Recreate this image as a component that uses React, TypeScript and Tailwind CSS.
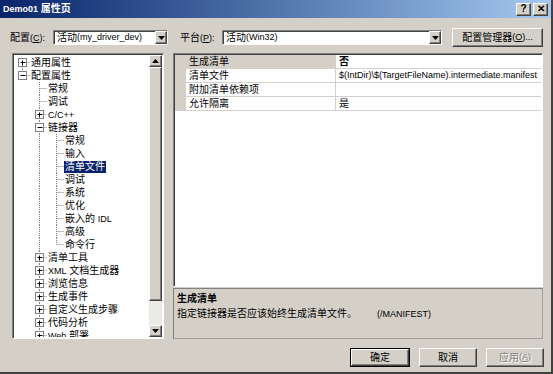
import React from 'react';

const FONT = { fontFamily: '"Liberation Sans", "Noto Sans CJK SC", sans-serif' };

const L: React.FC<{ children: React.ReactNode }> = ({ children }) => (
  <span className="text-[9px]">{children}</span>
);

const raised =
  'bg-[#d4d0c8] border border-t-white border-l-white border-b-[#404040] border-r-[#404040] shadow-[inset_-1px_-1px_0_#808080]';
const sunken =
  'border border-t-[#808080] border-l-[#808080] border-b-white border-r-white shadow-[inset_1px_1px_0_#404040]';

const Arrow: React.FC<{ up?: boolean }> = ({ up }) => (
  <svg width="7" height="4" viewBox="0 0 7 4">
    <path d={up ? 'M3.5 0 L7 4 L0 4 Z' : 'M0 0 L7 0 L3.5 4 Z'} fill="#000" />
  </svg>
);

const Combo: React.FC<{ w: string; children: React.ReactNode }> = ({ w, children }) => (
  <div className={`${w} h-[15px] bg-white flex items-stretch ${sunken}`}>
    <div className="flex-1 flex items-center pl-[3px] text-[10px] leading-none whitespace-nowrap overflow-hidden">
      {children}
    </div>
    <div className={`w-[12px] flex items-center justify-center ${raised}`}>
      <Arrow />
    </div>
  </div>
);

type Node = {
  label: React.ReactNode;
  level: number;
  kind: 'plus' | 'minus' | 'leaf';
  guides: boolean[];
  last?: boolean;
  first?: boolean;
  selected?: boolean;
};

const tree: Node[] = [
  { label: '通用属性', level: 0, kind: 'plus', guides: [], first: true },
  { label: '配置属性', level: 0, kind: 'minus', guides: [], last: true },
  { label: '常规', level: 1, kind: 'leaf', guides: [false] },
  { label: '调试', level: 1, kind: 'leaf', guides: [false] },
  { label: <L>C/C++</L>, level: 1, kind: 'plus', guides: [false] },
  { label: '链接器', level: 1, kind: 'minus', guides: [false] },
  { label: '常规', level: 2, kind: 'leaf', guides: [false, true] },
  { label: '输入', level: 2, kind: 'leaf', guides: [false, true] },
  { label: '清单文件', level: 2, kind: 'leaf', guides: [false, true], selected: true },
  { label: '调试', level: 2, kind: 'leaf', guides: [false, true] },
  { label: '系统', level: 2, kind: 'leaf', guides: [false, true] },
  { label: '优化', level: 2, kind: 'leaf', guides: [false, true] },
  { label: <>嵌入的 <L>IDL</L></>, level: 2, kind: 'leaf', guides: [false, true] },
  { label: '高级', level: 2, kind: 'leaf', guides: [false, true] },
  { label: '命令行', level: 2, kind: 'leaf', guides: [false, true], last: true },
  { label: '清单工具', level: 1, kind: 'plus', guides: [false] },
  { label: <><L>XML</L> 文档生成器</>, level: 1, kind: 'plus', guides: [false] },
  { label: '浏览信息', level: 1, kind: 'plus', guides: [false] },
  { label: '生成事件', level: 1, kind: 'plus', guides: [false] },
  { label: '自定义生成步骤', level: 1, kind: 'plus', guides: [false] },
  { label: '代码分析', level: 1, kind: 'plus', guides: [false] },
  { label: <><L>Web</L> 部署</>, level: 1, kind: 'plus', guides: [false] },
];

const TreeRow: React.FC<{ n: Node }> = ({ n }) => {
  const w = 16 + 17 * n.level;
  const cx = 8.5 + 17 * n.level;
  const cy = 6.5;
  return (
    <div className="h-[13px] flex items-center shrink-0">
      <svg width={w} height="13" className="shrink-0">
        <g stroke="#808080" strokeDasharray="1 1" fill="none">
          {n.guides.map((g, a) =>
            g ? <line key={a} x1={8.5 + 17 * a} y1="0" x2={8.5 + 17 * a} y2="13" /> : null
          )}
          <line x1={cx} y1={n.first ? cy : 0} x2={cx} y2={n.last ? cy : 13} />
          <line x1={cx} y1={cy} x2={cx + 8} y2={cy} />
        </g>
        {n.kind !== 'leaf' && (
          <g>
            <rect x={cx - 4} y={cy - 4} width="8" height="8" fill="#fff" stroke="#808080" />
            <line x1={cx - 2} y1={cy} x2={cx + 3} y2={cy} stroke="#000" />
            {n.kind === 'plus' && <line x1={cx} y1={cy - 2} x2={cx} y2={cy + 3} stroke="#000" />}
          </g>
        )}
      </svg>
      <span
        className={`px-[1px] text-[10px] leading-[12px] whitespace-nowrap ${
          n.selected ? 'bg-[#0a246a] text-white' : 'text-black'
        }`}
      >
        {n.label}
      </span>
    </div>
  );
};

const props = [
  { name: '生成清单', value: <span className="font-bold">否</span>, sel: true },
  { name: '清单文件', value: <L>$(IntDir)\$(TargetFileName).intermediate.manifest</L> },
  { name: '附加清单依赖项', value: '' },
  { name: '允许隔离', value: '是' },
];

export default function App() {
  return (
    <div
      style={FONT}
      className="w-[553px] h-[374px] bg-[#d4d0c8] flex flex-col text-black border-r-2 border-b-2 border-r-[#404040] border-b-[#404040] overflow-hidden"
    >
      {/* title bar */}
      <div className="h-[18px] shrink-0 flex items-center bg-gradient-to-r from-[#0a246a] to-[#a6caf0] pl-[3px] pr-[3px]">
        <span className="flex-1 text-white font-bold text-[10px] leading-none whitespace-nowrap">
          <L>Demo01</L> 属性页
        </span>
        <div className="flex gap-[2px]">
          <div className={`w-[15px] h-[13px] flex items-center justify-center text-[10px] font-bold leading-none ${raised}`}>
            ?
          </div>
          <div className={`w-[15px] h-[13px] flex items-center justify-center text-[10px] font-bold leading-none ${raised}`}>
            ✕
          </div>
        </div>
      </div>

      {/* configuration row */}
      <div className="mt-[10px] h-[19px] shrink-0 flex items-center pl-[10px] text-[10px] leading-none">
        <span className="w-[43px] whitespace-nowrap">
          配置<L>(<u>C</u>):</L>
        </span>
        <Combo w="w-[115px]">
          活动<L>(my_driver_dev)</L>
        </Combo>
        <span className="ml-[12px] w-[42px] whitespace-nowrap">
          平台<L>(<u>P</u>):</L>
        </span>
        <Combo w="w-[220px]">
          活动<L>(Win32)</L>
        </Combo>
        <div className={`ml-[10px] w-[91px] h-[19px] flex items-center justify-center whitespace-nowrap ${raised}`}>
          配置管理器<L>(<u>O</u>)...</L>
        </div>
      </div>

      {/* main */}
      <div className="mt-[6px] h-[286px] shrink-0 flex pl-[12px]">
        <div className={`w-[152px] bg-white flex p-[1px] ${sunken}`}>
          <div className="flex-1 flex flex-col overflow-hidden pt-[1px]">
            {tree.map((n, i) => (
              <TreeRow key={i} n={n} />
            ))}
          </div>
          <div className="w-[13px] flex flex-col">
            <div className={`h-[12px] flex items-center justify-center ${raised}`}>
              <Arrow up />
            </div>
            <div className={`h-[234px] ${raised}`} />
            <div className="flex-1 bg-[#eceae6]" />
            <div className={`h-[12px] flex items-center justify-center ${raised}`}>
              <Arrow />
            </div>
          </div>
        </div>

        <div className="ml-[9px] w-[370px] flex flex-col">
          <div className={`h-[234px] bg-white p-[1px] ${sunken}`}>
            {props.map((p, i) => (
              <div key={i} className="h-[14px] flex text-[10px] leading-none">
                <div className="w-[11px] bg-[#d4d0c8]" />
                <div
                  className={`w-[150px] flex items-center pl-[3px] border-b border-r border-[#d4d0c8] whitespace-nowrap ${
                    p.sel ? 'bg-[#d4d0c8]' : ''
                  }`}
                >
                  {p.name}
                </div>
                <div className="flex-1 flex items-center pl-[3px] border-b border-[#d4d0c8] whitespace-nowrap overflow-hidden">
                  {p.value}
                </div>
              </div>
            ))}
          </div>
          <div className="mt-[1px] flex-1 border border-t-[#808080] border-l-[#808080] border-b-[#a0a0a0] border-r-[#a0a0a0] pl-[3px] pt-[3px] text-[10px] leading-[18px]">
            <div className="font-bold leading-[13px]">生成清单</div>
            <div className="leading-[18px] whitespace-nowrap">
              指定链接器是否应该始终生成清单文件。<span className="ml-[20px]"><L>(/MANIFEST)</L></span>
            </div>
          </div>
        </div>
      </div>

      {/* buttons */}
      <div className="mt-[9px] h-[19px] shrink-0 flex justify-end gap-[9px] pr-[7px] text-[10px] leading-none">
        <div className="w-[60px] border border-black flex">
          <div className={`flex-1 flex items-center justify-center ${raised}`}>确定</div>
        </div>
        <div className={`w-[58px] flex items-center justify-center ${raised}`}>取消</div>
        <div
          className={`w-[58px] flex items-center justify-center text-[#808080] [text-shadow:1px_1px_0_#fff] ${raised}`}
        >
          应用<L>(<u>A</u>)</L>
        </div>
      </div>
    </div>
  );
}
